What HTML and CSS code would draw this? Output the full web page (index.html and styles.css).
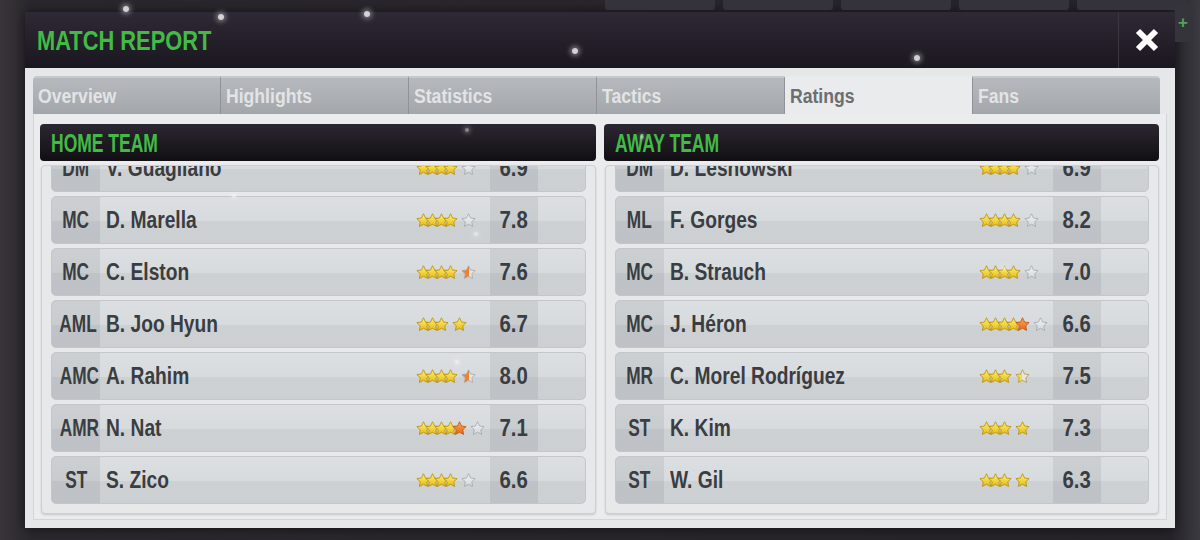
FILE: index.html
```html
<!DOCTYPE html>
<html>

<head>
    <meta charset="utf-8">
    <title>Match Report</title>
    <link rel="stylesheet" href="styles.css">
</head>

<body>
    <!-- 星星图形 -->
    <svg class="defs" width="0" height="0">
        <defs>
            <linearGradient id="gold" x1="0" y1="0" x2="0" y2="1">
                <stop offset="0" stop-color="#fff46e"/>
                <stop offset="1" stop-color="#e6b914"/>
            </linearGradient>
            <linearGradient id="orange" x1="0" y1="0" x2="0" y2="1">
                <stop offset="0" stop-color="#ffaa4c"/>
                <stop offset="1" stop-color="#e2661c"/>
            </linearGradient>
            <linearGradient id="grey" x1="0" y1="0" x2="0" y2="1">
                <stop offset="0" stop-color="#f2f3f4"/>
                <stop offset="1" stop-color="#d3d6d9"/>
            </linearGradient>
            <linearGradient id="half-orange" x1="0" y1="0" x2="1" y2="0">
                <stop offset="0" stop-color="#f0822c"/>
                <stop offset=".5" stop-color="#f0822c"/>
                <stop offset=".5" stop-color="#e3e5e7"/>
                <stop offset="1" stop-color="#e3e5e7"/>
            </linearGradient>
            <linearGradient id="half-gold" x1="0" y1="0" x2="1" y2="0">
                <stop offset="0" stop-color="#f6dc34"/>
                <stop offset=".5" stop-color="#f6dc34"/>
                <stop offset=".5" stop-color="#e3e5e7"/>
                <stop offset="1" stop-color="#e3e5e7"/>
            </linearGradient>
            <symbol id="star" viewBox="0 0 24 24">
                <path d="M12 1.2l3.2 6.8 7.4 1-5.4 5.1 1.4 7.4L12 18l-6.6 3.5 1.4-7.4-5.4-5.1 7.4-1z"/>
            </symbol>
        </defs>
    </svg>

    <div class="backdrop">
        <span class="bar"></span><span class="bar"></span><span class="bar"></span><span class="bar"></span><span class="bar"></span>
    </div>
    <div class="plus">+</div>

    <div class="modal">
        <div class="modal-head">
            <h1><span class="t">MATCH REPORT</span></h1>
            <div class="close">
                <svg width="26" height="26" viewBox="0 0 26 26"><path d="M4 4L22 22M22 4L4 22" stroke="#fff" stroke-width="6"/></svg>
            </div>
        </div>

        <div class="modal-body">
            <ul class="tabs">
                <li><span class="t">Overview</span></li>
                <li><span class="t">Highlights</span></li>
                <li><span class="t">Statistics</span></li>
                <li><span class="t">Tactics</span></li>
                <li class="active"><span class="t">Ratings</span></li>
                <li><span class="t">Fans</span></li>
            </ul>

            <div class="panel">
                <!-- 主队 -->
                <div class="team">
                    <div class="team-head"><span class="t">HOME TEAM</span></div>
                    <div class="list">
                        <div class="rows">
                            <div class="row">
                                <span class="pos"><span class="t">DM</span></span><span class="name"><span class="t">V. Guagliano</span></span>
                                <span class="stars"><span class="stack"><svg class="star g"><use href="#star"/></svg><svg class="star g"><use href="#star"/></svg><svg class="star g"><use href="#star"/></svg><svg class="star g"><use href="#star"/></svg></span><svg class="star e"><use href="#star"/></svg></span>
                                <span class="rate"><span class="t">6.9</span></span><span></span>
                            </div>
                            <div class="row">
                                <span class="pos"><span class="t">MC</span></span><span class="name"><span class="t">D. Marella</span></span>
                                <span class="stars"><span class="stack"><svg class="star g"><use href="#star"/></svg><svg class="star g"><use href="#star"/></svg><svg class="star g"><use href="#star"/></svg><svg class="star g"><use href="#star"/></svg></span><svg class="star e"><use href="#star"/></svg></span>
                                <span class="rate"><span class="t">7.8</span></span><span></span>
                            </div>
                            <div class="row">
                                <span class="pos"><span class="t">MC</span></span><span class="name"><span class="t">C. Elston</span></span>
                                <span class="stars"><span class="stack"><svg class="star g"><use href="#star"/></svg><svg class="star g"><use href="#star"/></svg><svg class="star g"><use href="#star"/></svg><svg class="star g"><use href="#star"/></svg></span><svg class="star ho"><use href="#star"/></svg></span>
                                <span class="rate"><span class="t">7.6</span></span><span></span>
                            </div>
                            <div class="row">
                                <span class="pos"><span class="t">AML</span></span><span class="name"><span class="t">B. Joo Hyun</span></span>
                                <span class="stars"><span class="stack"><svg class="star g"><use href="#star"/></svg><svg class="star g"><use href="#star"/></svg><svg class="star g"><use href="#star"/></svg></span><svg class="star g"><use href="#star"/></svg></span>
                                <span class="rate"><span class="t">6.7</span></span><span></span>
                            </div>
                            <div class="row">
                                <span class="pos"><span class="t">AMC</span></span><span class="name"><span class="t">A. Rahim</span></span>
                                <span class="stars"><span class="stack"><svg class="star g"><use href="#star"/></svg><svg class="star g"><use href="#star"/></svg><svg class="star g"><use href="#star"/></svg><svg class="star g"><use href="#star"/></svg></span><svg class="star ho"><use href="#star"/></svg></span>
                                <span class="rate"><span class="t">8.0</span></span><span></span>
                            </div>
                            <div class="row">
                                <span class="pos"><span class="t">AMR</span></span><span class="name"><span class="t">N. Nat</span></span>
                                <span class="stars"><span class="stack"><svg class="star g"><use href="#star"/></svg><svg class="star g"><use href="#star"/></svg><svg class="star g"><use href="#star"/></svg><svg class="star g"><use href="#star"/></svg><svg class="star o"><use href="#star"/></svg></span><svg class="star e"><use href="#star"/></svg></span>
                                <span class="rate"><span class="t">7.1</span></span><span></span>
                            </div>
                            <div class="row">
                                <span class="pos"><span class="t">ST</span></span><span class="name"><span class="t">S. Zico</span></span>
                                <span class="stars"><span class="stack"><svg class="star g"><use href="#star"/></svg><svg class="star g"><use href="#star"/></svg><svg class="star g"><use href="#star"/></svg><svg class="star g"><use href="#star"/></svg></span><svg class="star e"><use href="#star"/></svg></span>
                                <span class="rate"><span class="t">6.6</span></span><span></span>
                            </div>
                        </div>
                    </div>
                </div>

                <!-- 客队 -->
                <div class="team">
                    <div class="team-head"><span class="t">AWAY TEAM</span></div>
                    <div class="list">
                        <div class="rows">
                            <div class="row">
                                <span class="pos"><span class="t">DM</span></span><span class="name"><span class="t">D. Lesnowski</span></span>
                                <span class="stars"><span class="stack"><svg class="star g"><use href="#star"/></svg><svg class="star g"><use href="#star"/></svg><svg class="star g"><use href="#star"/></svg><svg class="star g"><use href="#star"/></svg></span><svg class="star e"><use href="#star"/></svg></span>
                                <span class="rate"><span class="t">6.9</span></span><span></span>
                            </div>
                            <div class="row">
                                <span class="pos"><span class="t">ML</span></span><span class="name"><span class="t">F. Gorges</span></span>
                                <span class="stars"><span class="stack"><svg class="star g"><use href="#star"/></svg><svg class="star g"><use href="#star"/></svg><svg class="star g"><use href="#star"/></svg><svg class="star g"><use href="#star"/></svg></span><svg class="star e"><use href="#star"/></svg></span>
                                <span class="rate"><span class="t">8.2</span></span><span></span>
                            </div>
                            <div class="row">
                                <span class="pos"><span class="t">MC</span></span><span class="name"><span class="t">B. Strauch</span></span>
                                <span class="stars"><span class="stack"><svg class="star g"><use href="#star"/></svg><svg class="star g"><use href="#star"/></svg><svg class="star g"><use href="#star"/></svg><svg class="star g"><use href="#star"/></svg></span><svg class="star e"><use href="#star"/></svg></span>
                                <span class="rate"><span class="t">7.0</span></span><span></span>
                            </div>
                            <div class="row">
                                <span class="pos"><span class="t">MC</span></span><span class="name"><span class="t">J. Héron</span></span>
                                <span class="stars"><span class="stack"><svg class="star g"><use href="#star"/></svg><svg class="star g"><use href="#star"/></svg><svg class="star g"><use href="#star"/></svg><svg class="star g"><use href="#star"/></svg><svg class="star o"><use href="#star"/></svg></span><svg class="star e"><use href="#star"/></svg></span>
                                <span class="rate"><span class="t">6.6</span></span><span></span>
                            </div>
                            <div class="row">
                                <span class="pos"><span class="t">MR</span></span><span class="name"><span class="t">C. Morel Rodríguez</span></span>
                                <span class="stars"><span class="stack"><svg class="star g"><use href="#star"/></svg><svg class="star g"><use href="#star"/></svg><svg class="star g"><use href="#star"/></svg></span><svg class="star hg"><use href="#star"/></svg></span>
                                <span class="rate"><span class="t">7.5</span></span><span></span>
                            </div>
                            <div class="row">
                                <span class="pos"><span class="t">ST</span></span><span class="name"><span class="t">K. Kim</span></span>
                                <span class="stars"><span class="stack"><svg class="star g"><use href="#star"/></svg><svg class="star g"><use href="#star"/></svg><svg class="star g"><use href="#star"/></svg></span><svg class="star g"><use href="#star"/></svg></span>
                                <span class="rate"><span class="t">7.3</span></span><span></span>
                            </div>
                            <div class="row">
                                <span class="pos"><span class="t">ST</span></span><span class="name"><span class="t">W. Gil</span></span>
                                <span class="stars"><span class="stack"><svg class="star g"><use href="#star"/></svg><svg class="star g"><use href="#star"/></svg><svg class="star g"><use href="#star"/></svg></span><svg class="star g"><use href="#star"/></svg></span>
                                <span class="rate"><span class="t">6.3</span></span><span></span>
                            </div>
                        </div>
                    </div>
                </div>
            </div>
        </div>
    </div>

    <!-- 雪花 -->
    <span class="flake" style="left:123px;top:6px"></span>
    <span class="flake" style="left:218px;top:14px"></span>
    <span class="flake" style="left:364px;top:11px"></span>
    <span class="flake" style="left:914px;top:55px"></span>
    <span class="flake" style="left:572px;top:48px"></span>
    <span class="flake small" style="left:465px;top:128px"></span>
    <span class="flake small" style="left:232px;top:194px"></span>
    <span class="flake small" style="left:474px;top:232px"></span>
    <span class="flake small" style="left:1002px;top:266px"></span>
    <span class="flake small" style="left:455px;top:360px"></span>
    <span class="flake small" style="left:640px;top:135px"></span>
</body>

</html>
```

FILE: styles.css
```css
body {
    margin: 0;
    padding: 0;
    width: 1200px;
    height: 540px;
    overflow: hidden;
    background: linear-gradient(90deg, #3a3438 0, #2b292f 30px, #26242a 1170px, #3b3a40 1200px);
    font-family: "Liberation Sans", Arial, sans-serif;
    font-weight: bold;
    position: relative;
}

.defs {
    position: absolute;
}

/* 窄字体：把文字横向压缩 */
.t {
    display: inline-block;
    white-space: nowrap;
    transform: scaleX(.8);
    transform-origin: 0 50%;
}

/*背景*/

.backdrop {
    height: 12px;
    display: flex;
    gap: 8px;
    padding-left: 605px;
}

.backdrop .bar {
    width: 110px;
    height: 10px;
    background-color: #34323a;
    border-radius: 0 0 3px 3px;
}

.plus {
    position: absolute;
    left: 1175px;
    top: 4px;
    width: 16px;
    height: 38px;
    background-color: #35343a;
    color: #4fa35a;
    font-size: 17px;
    line-height: 38px;
    text-align: center;
}

/*弹窗*/

.modal {
    margin: 0 25px;
    height: 516px;
    display: flex;
    flex-direction: column;
    box-shadow: 0 0 12px rgba(0, 0, 0, .6);
}

.modal-head {
    height: 56px;
    display: flex;
    background: linear-gradient(#2e2934, #1b1720);
}

.modal-head h1 {
    flex: 1;
    margin: 0;
    padding-left: 12px;
    font-size: 28px;
    line-height: 58px;
    color: #42bb45;
    font-weight: bold;
}

.modal-head h1 .t {
    transform: scaleX(.78);
}

.modal-head .close {
    width: 56px;
    border-left: 1px solid #3b3640;
    display: flex;
    align-items: center;
    justify-content: center;
}

.modal-body {
    flex: 1;
    background-color: #e5e7e8;
    padding: 8px 8px 8px 8px;
    display: flex;
    flex-direction: column;
}

/*标签*/

.tabs {
    list-style-type: none;
    margin: 0 7px 0 0;
    padding: 0;
    height: 38px;
    display: flex;
}

.tabs > li {
    flex: 1;
    background: linear-gradient(#b6b9bd, #a3a6ab);
    border-top: 2px solid #c6c8cb;
    border-left: 1px solid #8f9297;
    color: #e2e4e6;
    font-size: 20px;
    line-height: 36px;
    padding-left: 5px;
}

.tabs > li .t {
    transform: scaleX(.88);
}

.tabs > li:first-child {
    border-left: 0;
    border-top-left-radius: 4px;
}

.tabs > li:last-child {
    border-top-right-radius: 4px;
}

.tabs > li.active {
    background: #e9ebec;
    border-top-color: #e9ebec;
    color: #6b6e72;
}

/*内容*/

.panel {
    flex: 1;
    background-color: #eaeced;
    border: 1px solid #d3d6d8;
    border-top: 0;
    padding: 10px 7px 5px 6px;
    display: flex;
    gap: 8px;
}

.team {
    flex: 1;
    display: flex;
    flex-direction: column;
}

.team-head {
    height: 37px;
    border-radius: 4px;
    background: linear-gradient(#2c2631, #110f13);
    color: #42bb45;
    font-size: 25px;
    line-height: 38px;
    padding-left: 11px;
}

.team-head .t {
    transform: scaleX(.7);
}

.list {
    margin: 4px 0 0 1px;
    height: 347px;
    overflow: hidden;
    background-color: #e6e8e9;
    border: 1px solid #cdd0d3;
    border-radius: 4px;
    box-shadow: 0 1px 2px rgba(0, 0, 0, .15);
    padding: 0 9px;
}

.rows {
    margin-top: -22px;
    display: flex;
    flex-direction: column;
    gap: 4px;
}

.row {
    height: 46px;
    display: grid;
    grid-template-columns: 48px 1fr 74px 48px 47px;
    align-items: stretch;
    border: 1px solid #c3c7ca;
    border-radius: 5px;
    overflow: hidden;
    background: linear-gradient(#dcdfe1 0, #d8dbdd 52%, #cdd1d4 52%, #ccd0d3 100%);
    color: #3a3d41;
    font-size: 24px;
    line-height: 46px;
}

.row .pos,
.row .rate {
    background-color: rgba(90, 100, 110, .12);
    text-align: center;
}

.row .pos .t {
    transform: scaleX(.72);
    transform-origin: 50% 50%;
}

.row .rate .t {
    transform: scaleX(.85);
    transform-origin: 50% 50%;
}

.row .name {
    padding-left: 6px;
}

.stars {
    display: flex;
    align-items: center;
}

.stack {
    display: flex;
    margin-right: 3px;
}

.star {
    width: 15px;
    height: 15px;
    stroke-width: 1.3;
}

.stack .star + .star {
    margin-left: -6px;
}

.star.g { fill: url(#gold); stroke: #b48d12; }
.star.o { fill: url(#orange); stroke: #b9531a; }
.star.e { fill: url(#grey); stroke: #a3a8ad; }
.star.ho { fill: url(#half-orange); stroke: #a3a8ad; }
.star.hg { fill: url(#half-gold); stroke: #b49a40; }

/*雪花*/

.flake {
    position: absolute;
    width: 6px;
    height: 6px;
    border-radius: 50%;
    background-color: rgba(255, 255, 255, .8);
    box-shadow: 0 0 5px 2px rgba(255, 255, 255, .4);
}

.flake.small {
    width: 4px;
    height: 4px;
    background-color: rgba(255, 255, 255, .45);
    box-shadow: 0 0 4px 2px rgba(255, 255, 255, .2);
}
```
